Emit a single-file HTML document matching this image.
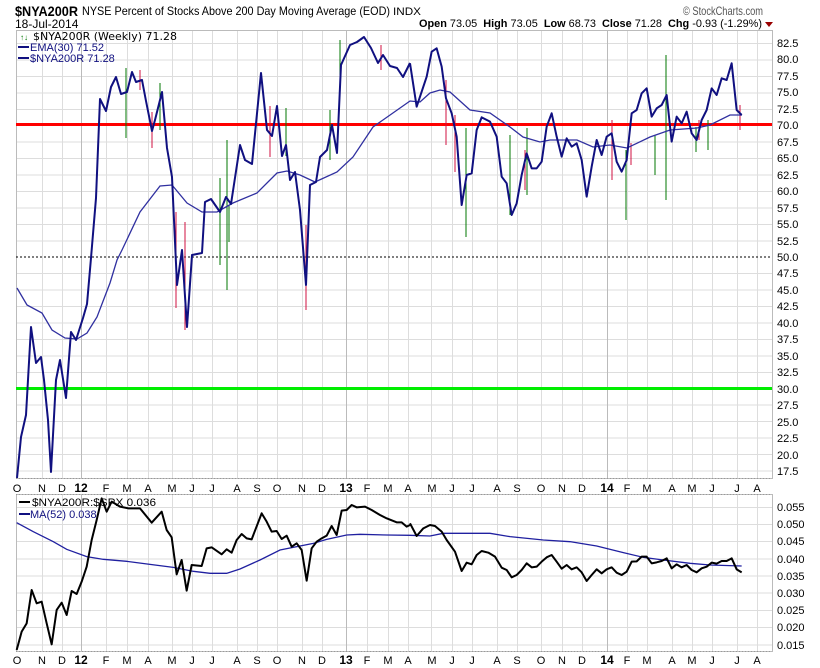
<!DOCTYPE html>
<html><head><meta charset="utf-8"><style>
body{margin:0;background:#fff;width:820px;height:668px;overflow:hidden;font-family:"Liberation Sans",sans-serif}
svg{display:block}
text{font-family:"Liberation Sans",sans-serif}
</style></head><body>
<svg width="820" height="668" viewBox="0 0 820 668" xmlns="http://www.w3.org/2000/svg">
<rect width="820" height="668" fill="#fff"/>
<!-- header -->
<text x="15" y="16" font-size="14" font-weight="bold" fill="#000" textLength="63" lengthAdjust="spacingAndGlyphs">$NYA200R</text>
<text x="82" y="15" font-size="12" fill="#000" textLength="308" lengthAdjust="spacingAndGlyphs">NYSE Percent of Stocks Above 200 Day Moving Average (EOD)</text>
<text x="393" y="15" font-size="11" fill="#000" textLength="28" lengthAdjust="spacingAndGlyphs">INDX</text>
<text x="15" y="28" font-size="12" fill="#000">18-Jul-2014</text>
<text x="683" y="15" font-size="12" fill="#555" textLength="80" lengthAdjust="spacingAndGlyphs">© StockCharts.com</text>
<text x="419" y="27" font-size="11" fill="#000" textLength="343" lengthAdjust="spacingAndGlyphs"><tspan font-weight="bold">Open</tspan> 73.05 <tspan font-weight="bold" dx="3">High</tspan> 73.05 <tspan font-weight="bold" dx="3">Low</tspan> 68.73 <tspan font-weight="bold" dx="3">Close</tspan> 71.28 <tspan font-weight="bold" dx="3">Chg</tspan> -0.93 (-1.29%)</text>
<polygon points="765,22 773,22 769,27" fill="#900"/>

<!-- grid price -->
<g stroke="#ddd" stroke-width="1">
<path d="M16 43.5H772M16 60H772M16 76.5H772M16 93H772M16 109.5H772M16 142H772M16 158.5H772M16 175H772M16 191.5H772M16 208H772M16 224.5H772M16 241H772M16 273.5H772M16 290H772M16 306.5H772M16 323H772M16 339.5H772M16 356H772M16 372.5H772M16 405H772M16 421.5H772M16 438H772M16 454.5H772M16 471H772"/>
<path d="M16 507.5H772M16 524.5H772M16 541.5H772M16 559H772M16 576H772M16 593H772M16 610.5H772M16 627.5H772M16 645H772"/>
<path d="M42.5 30V478M62.5 30V478M106.5 30V478M127.5 30V478M148.5 30V478M172.5 30V478M192.5 30V478M212.5 30V478M237.5 30V478M257.5 30V478M277.5 30V478M302.5 30V478M322.5 30V478M367.5 30V478M388.5 30V478M408.5 30V478M431.5 30V478M452.5 30V478M472.5 30V478M497.5 30V478M517.5 30V478M541.5 30V478M562.5 30V478M582.5 30V478M627.5 30V478M647.5 30V478M672.5 30V478M692.5 30V478M712.5 30V478M737.5 30V478M757.5 30V478"/>
<path d="M42.5 494V651M62.5 494V651M106.5 494V651M127.5 494V651M148.5 494V651M172.5 494V651M192.5 494V651M212.5 494V651M237.5 494V651M257.5 494V651M277.5 494V651M302.5 494V651M322.5 494V651M367.5 494V651M388.5 494V651M408.5 494V651M431.5 494V651M452.5 494V651M472.5 494V651M497.5 494V651M517.5 494V651M541.5 494V651M562.5 494V651M582.5 494V651M627.5 494V651M647.5 494V651M672.5 494V651M692.5 494V651M712.5 494V651M737.5 494V651M757.5 494V651"/>
</g>
<g stroke="#bbb"><path d="M81.5 30V478M346.5 30V478M607.5 30V478M81.5 494V651M346.5 494V651M607.5 494V651"/></g>
<!-- borders -->
<rect x="16.5" y="30.5" width="756" height="448" fill="none" stroke="#bbb"/>
<rect x="16.5" y="494.5" width="756" height="157" fill="none" stroke="#bbb"/>
<path d="M16 478.5H772M16 494.5H772M16 651.5H772" stroke="#999" stroke-dasharray="1,2"/>

<!-- ref lines -->
<path d="M16 257H772" stroke="#000" stroke-dasharray="2,2"/>
<path d="M16 124.5H772" stroke="#f00" stroke-width="3"/>
<path d="M16 388.5H772" stroke="#0e0" stroke-width="3"/>

<!-- some OHLC bars -->
<g stroke="#070" stroke-width="1" fill="none">
<path d="M126 68V138M160 83V130M220 178V265M229 205V242M286 108V156M330 110V160M227 140V290M340 40V75M466 128V237M510 135V215M527 128V195M626 150V220M655 135V175M666 55V200M696 127V152M708 120V150"/>
</g>
<g stroke="#d01040" stroke-width="1" fill="none">
<path d="M176 212V308M185 222V330M152 112V148M270 106V157M306 225V310M140 70V90M381 45V70M446 80V145M455 115V172M525 150V190M612 120V180M631 143V165M699 120V140M740 105V130"/>
</g>

<!-- EMA -->
<polyline fill="none" stroke="#3030a0" stroke-width="1.3" points="17,288 27,305 42,313 52,330 65,338 77,339 87,333 97,317 110,283 117,260 122,250 140,212 160,186 172,185 187,203 202,212 217,212 233,203 257,193 277,173 287,171 300,175 315,182 337,172 353,157 373,127 410,101 420,102 430,93 440,90 450,92 470,110 490,113 510,127 523,137 540,142 550,140 577,140 593,147 610,145 627,148 650,137 670,130 697,128 710,125 730,115 742,115"/>
<!-- price line -->
<polyline fill="none" stroke="#101080" stroke-width="2" stroke-linejoin="round" points="17,478 21,437 26,415 31,327 36,363 41,357 44,380 48,420 51,472 56,380 60,360 66,398 71,332 76,340 83,318 87,304 91,258 96,198 100,99 106,111 111,87 116,77 121,94 127,92 132,72 136,82 142,80 146,101 152,131 155,120 162,92 167,148 172,177 177,285 182,250 187,327 192,255 202,253 205,202 211,199 220,212 226,197 231,204 240,145 245,160 252,164 261,73 267,130 272,136 277,106 282,156 286,145 290,180 295,172 300,210 306,285 310,185 316,182 320,157 327,150 332,125 337,153 341,65 350,45 357,42 364,37 371,48 378,63 383,55 390,66 397,68 403,77 410,63"/>
<g transform="translate(410,30) scale(0.33333)">
<polyline fill="none" stroke="#101080" stroke-width="2" vector-effect="non-scaling-stroke" stroke-linejoin="round" points="0,100 20,230 50,140 65,65 80,55 95,110 108,205 125,250 140,320 155,525 170,435 185,430 200,300 215,262 240,275 260,320 275,440 290,460 305,555 320,520 335,435 350,370 365,415 380,415 395,395 410,290 425,250 440,320 455,380 470,325 485,350 500,340 515,390 530,500 545,410 560,330 575,375 590,320 605,310 620,395 635,425 650,390 665,250 680,240 695,190 710,175 725,260 740,235 755,225 770,195 785,335 800,260 815,280 830,245 845,310 860,330 875,270 890,240 905,175 920,195 935,145 950,150 965,100 980,240 995,255"/>
</g>

<!-- legend -->
<text x="20" y="40" font-size="8" fill="#070">↑↓</text>
<text x="33" y="40" font-size="11" fill="#000" style="font-family:'DejaVu Sans',sans-serif" textLength="144" lengthAdjust="spacingAndGlyphs">$NYA200R (Weekly) 71.28</text>
<path d="M18 47H29M18 58H29" stroke="#101080" stroke-width="2"/>
<text x="30" y="51" font-size="11" fill="#101080">EMA(30) 71.52</text>
<text x="30" y="62" font-size="11" fill="#101080">$NYA200R 71.28</text>

<!-- price labels -->
<g font-size="11" fill="#000">
<text x="777" y="47">82.5</text><text x="777" y="63">80.0</text><text x="777" y="80">77.5</text><text x="777" y="96">75.0</text><text x="777" y="113">72.5</text><text x="777" y="129">70.0</text><text x="777" y="146">67.5</text><text x="777" y="162">65.0</text><text x="777" y="179">62.5</text><text x="777" y="195">60.0</text><text x="777" y="212">57.5</text><text x="777" y="228">55.0</text><text x="777" y="245">52.5</text><text x="777" y="261">50.0</text><text x="777" y="277">47.5</text><text x="777" y="294">45.0</text><text x="777" y="310">42.5</text><text x="777" y="327">40.0</text><text x="777" y="343">37.5</text><text x="777" y="360">35.0</text><text x="777" y="376">32.5</text><text x="777" y="393">30.0</text><text x="777" y="409">27.5</text><text x="777" y="426">25.0</text><text x="777" y="442">22.5</text><text x="777" y="459">20.0</text><text x="777" y="475">17.5</text>
<text x="777" y="511">0.055</text><text x="777" y="528">0.050</text><text x="777" y="545">0.045</text><text x="777" y="563">0.040</text><text x="777" y="580">0.035</text><text x="777" y="597">0.030</text><text x="777" y="614">0.025</text><text x="777" y="631">0.020</text><text x="777" y="649">0.015</text>
</g>
<!-- month labels -->
<g font-size="11" fill="#000" text-anchor="middle" id="m1">
<text x="17" y="492">O</text><text x="42" y="492">N</text><text x="62" y="492">D</text><text x="81" y="492" font-weight="bold" font-size="12">12</text><text x="106" y="492">F</text><text x="127" y="492">M</text><text x="148" y="492">A</text><text x="172" y="492">M</text><text x="192" y="492">J</text><text x="212" y="492">J</text><text x="237" y="492">A</text><text x="257" y="492">S</text><text x="277" y="492">O</text><text x="302" y="492">N</text><text x="322" y="492">D</text><text x="346" y="492" font-weight="bold" font-size="12">13</text><text x="367" y="492">F</text><text x="388" y="492">M</text><text x="408" y="492">A</text><text x="432" y="492">M</text><text x="452" y="492">J</text><text x="472" y="492">J</text><text x="497" y="492">A</text><text x="517" y="492">S</text><text x="541" y="492">O</text><text x="562" y="492">N</text><text x="582" y="492">D</text><text x="607" y="492" font-weight="bold" font-size="12">14</text><text x="627" y="492">F</text><text x="647" y="492">M</text><text x="672" y="492">A</text><text x="692" y="492">M</text><text x="712" y="492">J</text><text x="737" y="492">J</text><text x="757" y="492">A</text>
</g>
<use href="#m1" transform="translate(0,172)"/>

<!-- lower panel -->
<g transform="translate(0,460) scale(0.33333)">
<polyline fill="none" stroke="#2020a0" stroke-width="1.3" vector-effect="non-scaling-stroke" points="50,188 100,215 160,245 200,268 260,290 310,298 380,304 450,313 520,322 580,334 630,340 680,340 720,327 780,300 840,270 900,258 940,250 980,238 1040,225 1080,223 1160,225 1230,226"/>
<polyline fill="none" stroke="#000" stroke-width="2" vector-effect="non-scaling-stroke" stroke-linejoin="round" points="50,570 65,515 80,490 95,390 110,430 125,425 140,490 155,553 170,450 185,428 200,465 215,393 230,402 245,365 260,320 275,240 290,180 305,115 320,155 335,125 360,140 385,145 420,145 455,188 485,155 500,210 515,232 530,343 545,300 560,392 575,315 605,318 620,265 635,262 665,283 680,268 695,278 710,240 725,222 740,235 755,238 785,160 800,185 815,215 830,213 845,237 860,227 875,260 890,250 905,270 920,362 935,265 950,245 965,235 980,227 995,198 1010,225 1025,152 1040,150 1055,135 1070,142 1095,140 1115,150 1140,165 1160,175 1190,187 1205,187 1220,200 1230,195"/>
</g>
<g transform="translate(410,460) scale(0.33333)">
<polyline fill="none" stroke="#2020a0" stroke-width="1.3" vector-effect="non-scaling-stroke" points="0,226 60,228 100,220 240,220 300,230 400,240 480,245 560,258 640,278 700,292 760,300 840,310 900,315 995,318"/>
<polyline fill="none" stroke="#000" stroke-width="2" vector-effect="non-scaling-stroke" stroke-linejoin="round" points="0,190 20,228 40,205 60,195 75,198 95,215 110,240 135,275 155,333 170,308 185,313 200,285 215,273 235,278 255,290 275,323 290,330 305,352 320,345 335,330 350,310 365,322 380,320 395,305 410,292 425,285 440,305 455,326 470,315 485,328 500,322 515,337 530,363 545,345 560,328 575,340 590,328 605,322 620,338 635,345 650,335 665,305 680,304 695,290 710,290 725,310 740,307 755,303 770,295 785,325 800,313 815,322 830,315 845,330 860,337 875,325 890,320 905,308 920,311 935,303 950,303 965,295 980,328 995,337"/>
</g>
<path d="M19 502H30" stroke="#000" stroke-width="2"/>
<text x="32" y="506" font-size="11" fill="#000" textLength="124" lengthAdjust="spacingAndGlyphs">$NYA200R:$SPX 0.036</text>
<path d="M19 514H30" stroke="#101080" stroke-width="2"/>
<text x="30" y="518" font-size="11" fill="#101080">MA(52) 0.038</text>
</svg>
</body></html>
